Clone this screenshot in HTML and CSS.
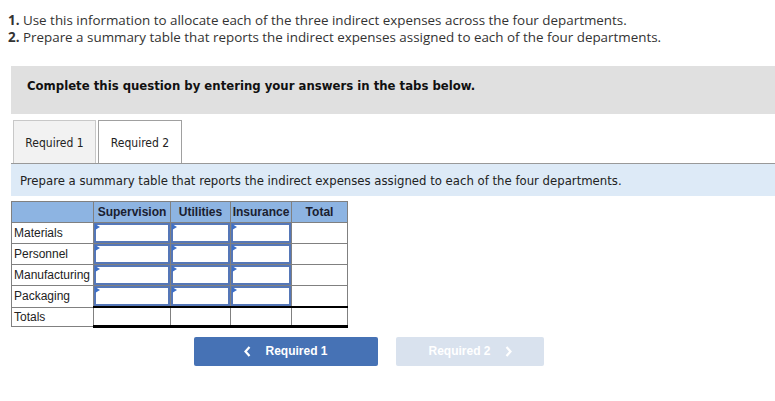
FILE: index.html
```html
<!DOCTYPE html>
<html>
<head>
<meta charset="utf-8">
<link rel="stylesheet" href="styles.css">
</head>
<body>
<div class="instructions">
  <p><b>1.</b> Use this information to allocate each of the three indirect expenses across the four departments.</p>
  <p><b>2.</b> Prepare a summary table that reports the indirect expenses assigned to each of the four departments.</p>
</div>
<div class="banner">Complete this question by entering your answers in the tabs below.</div>
<div class="tabs">
  <div class="tab">Required 1</div>
  <div class="tab active">Required 2</div>
</div>
<div class="panel">Prepare a summary table that reports the indirect expenses assigned to each of the four departments.</div>
<table class="grid">
  <colgroup><col class="w0"><col class="w1"><col class="w2"><col class="w3"><col class="w4"></colgroup>
  <thead>
    <tr><th class="lbl"></th><th>Supervision</th><th>Utilities</th><th>Insurance</th><th>Total</th></tr>
  </thead>
  <tbody>
    <tr><td class="lbl">Materials</td><td class="in"><span class="box"></span></td><td class="in"><span class="box"></span></td><td class="in"><span class="box"></span></td><td></td></tr>
    <tr><td class="lbl">Personnel</td><td class="in"><span class="box"></span></td><td class="in"><span class="box"></span></td><td class="in"><span class="box"></span></td><td></td></tr>
    <tr><td class="lbl">Manufacturing</td><td class="in"><span class="box"></span></td><td class="in"><span class="box"></span></td><td class="in"><span class="box"></span></td><td></td></tr>
    <tr><td class="lbl">Packaging</td><td class="in"><span class="box"></span></td><td class="in"><span class="box"></span></td><td class="in"><span class="box"></span></td><td></td></tr>
    <tr class="totals"><td class="lbl">Totals</td><td></td><td></td><td></td><td></td></tr>
  </tbody>
</table>
<div class="nav">
  <div class="btn prev"><svg class="chev" width="7" height="11" viewBox="0 0 7 11"><path d="M5.5 1 L1.5 5.5 L5.5 10" fill="none" stroke="#fff" stroke-width="2.2"/></svg>Required 1</div>
  <div class="btn next">Required 2<svg class="chev" width="7" height="11" viewBox="0 0 7 11"><path d="M1.5 1 L5.5 5.5 L1.5 10" fill="none" stroke="#fff" stroke-width="2.2"/></svg></div>
</div>
</body>
</html>
```
FILE: styles.css
```css
* { box-sizing: border-box; }
body {
  margin: 0;
  background: #fff;
  font-family: "Open Sans", "Lato", sans-serif;
}
.instructions {
  padding: 12px 0 0 8px;
  color: #333;
  font-size: 13.4px;
  line-height: 17px;
}
.instructions p { margin: 0; }
.instructions b { font-weight: 700; }
.banner {
  margin: 20px 0 0 11px;
  height: 48px;
  background: #e0e0e0;
  font-family: "DejaVu Sans Condensed", "DejaVu Sans", sans-serif;
  font-weight: bold;
  font-size: 13px;
  color: #111;
  padding: 12px 0 0 16px;
}
.tabs {
  display: flex;
  gap: 2px;
  margin: 6px 0 0 13px;
  height: 43px;
}
.tab {
  width: 83px;
  border: 1px solid #c8c8c8;
  border-bottom: none;
  background: #f2f2f2;
  font-family: "DejaVu Sans Condensed", "DejaVu Sans", sans-serif;
  font-size: 12px;
  color: #222;
  display: flex;
  align-items: center;
  justify-content: center;
  padding-top: 1px;
}
.tab.active {
  width: 84px;
  background: #fff;
  border-color: #a0a0a0;
}
.panel {
  margin-left: 11px;
  border-top: 1px solid #999;
  background: #ddeaf7;
  height: 33px;
  font-family: "DejaVu Sans Condensed", "DejaVu Sans", sans-serif;
  font-size: 13px;
  color: #222;
  padding: 9px 0 0 9px;
}
.grid {
  margin: 5px 0 0 11px;
  border-collapse: collapse;
  table-layout: fixed;
  width: 336px;
  font-family: "Liberation Sans", Arial, sans-serif;
  font-size: 12px;
  color: #222;
}
.w0 { width: 82px; }
.w1 { width: 77px; }
.w2 { width: 60px; }
.w3 { width: 61px; }
.w4 { width: 56px; }
.grid th {
  background: #8db4e2;
  border: 1px solid #808080;
  height: 21px;
  font-weight: bold;
  color: #1a2030;
  padding: 0;
  text-align: center;
  white-space: nowrap;
}
.grid td {
  border: 1px solid #808080;
  height: 21px;
  padding: 0;
}
.grid .lbl { text-align: left; padding-left: 2px; white-space: nowrap; }
.grid td.in { position: relative; }
.box {
  display: block;
  height: 20px;
  border: 2px solid #5577b8;
}
.grid td.in::before {
  content: "";
  position: absolute;
  left: 1px;
  top: 1px;
  border-left: 5px solid #3d6fc6;
  border-top: 3px solid transparent;
  border-bottom: 3px solid transparent;
  width: 0;
  height: 0;
}
.grid tr.totals td { height: 19px; border-top: 2px solid #000; border-bottom: 3px solid #000; }
.grid tr.totals td.lbl { border-top: 1px solid #808080; border-bottom: 1px solid #808080; }
.nav {
  display: flex;
  margin: 9px 0 0 194px;
  gap: 18px;
}
.btn {
  height: 29px;
  border-radius: 2px;
  color: #fff;
  font-family: "Liberation Sans", Arial, sans-serif;
  font-weight: bold;
  font-size: 12px;
  display: flex;
  align-items: center;
  justify-content: center;
}
.btn.prev { width: 184px; background: #4672b5; }
.btn.next { width: 148px; background: #d9e2ee; }
.prev .chev { margin-right: 14px; }
.next .chev { margin-left: 14px; }
```
